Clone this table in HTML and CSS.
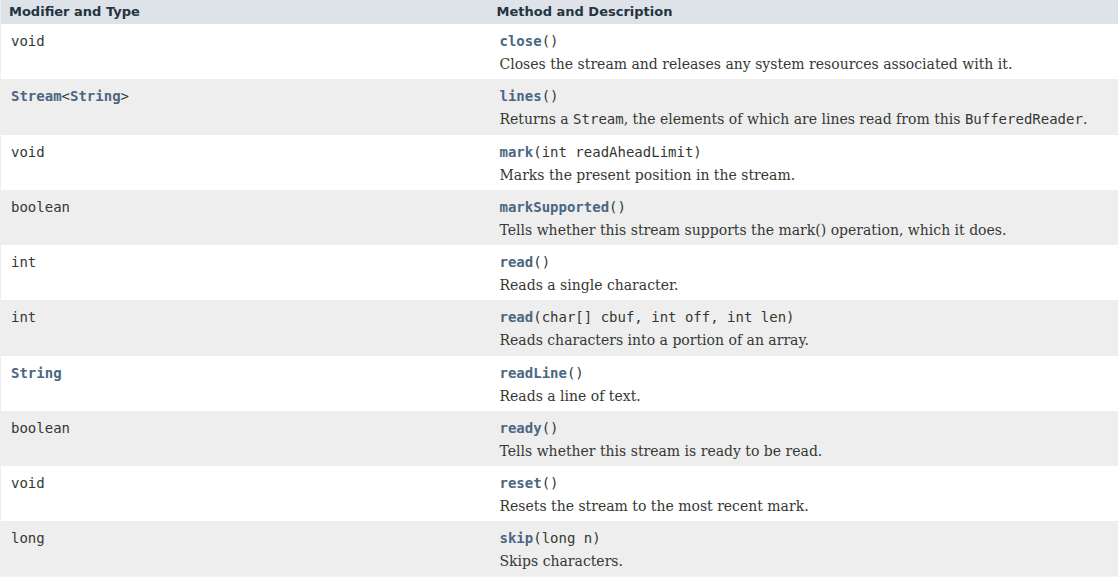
FILE: index.html
```html
<!DOCTYPE html>
<html>
<head>
<meta charset="utf-8">
<link rel="stylesheet" href="styles.css">
</head>
<body>
<table class="summary">
  <thead>
    <tr><th class="col-first">Modifier and Type</th><th class="col-last">Method and Description</th></tr>
  </thead>
  <tbody>
    <tr class="alt">
      <td class="col-first"><code>void</code></td>
      <td class="col-last"><code><a class="member">close</a>()</code><div class="desc">Closes the stream and releases any system resources associated with it.</div></td>
    </tr>
    <tr class="row">
      <td class="col-first"><code><a class="type">Stream</a>&lt;<a class="type">String</a>&gt;</code></td>
      <td class="col-last"><code><a class="member">lines</a>()</code><div class="desc">Returns a <code>Stream</code>, the elements of which are lines read from this <code>BufferedReader</code>.</div></td>
    </tr>
    <tr class="alt">
      <td class="col-first"><code>void</code></td>
      <td class="col-last"><code><a class="member">mark</a>(int&nbsp;readAheadLimit)</code><div class="desc">Marks the present position in the stream.</div></td>
    </tr>
    <tr class="row">
      <td class="col-first"><code>boolean</code></td>
      <td class="col-last"><code><a class="member">markSupported</a>()</code><div class="desc">Tells whether this stream supports the mark() operation, which it does.</div></td>
    </tr>
    <tr class="alt">
      <td class="col-first"><code>int</code></td>
      <td class="col-last"><code><a class="member">read</a>()</code><div class="desc">Reads a single character.</div></td>
    </tr>
    <tr class="row">
      <td class="col-first"><code>int</code></td>
      <td class="col-last"><code><a class="member">read</a>(char[]&nbsp;cbuf, int&nbsp;off, int&nbsp;len)</code><div class="desc">Reads characters into a portion of an array.</div></td>
    </tr>
    <tr class="alt">
      <td class="col-first"><code><a class="type">String</a></code></td>
      <td class="col-last"><code><a class="member">readLine</a>()</code><div class="desc">Reads a line of text.</div></td>
    </tr>
    <tr class="row">
      <td class="col-first"><code>boolean</code></td>
      <td class="col-last"><code><a class="member">ready</a>()</code><div class="desc">Tells whether this stream is ready to be read.</div></td>
    </tr>
    <tr class="alt">
      <td class="col-first"><code>void</code></td>
      <td class="col-last"><code><a class="member">reset</a>()</code><div class="desc">Resets the stream to the most recent mark.</div></td>
    </tr>
    <tr class="row">
      <td class="col-first"><code>long</code></td>
      <td class="col-last"><code><a class="member">skip</a>(long&nbsp;n)</code><div class="desc">Skips characters.</div></td>
    </tr>
  </tbody>
</table>
</body>
</html>
```

FILE: styles.css
```css
html, body {
  margin: 0;
  padding: 0;
  background: #ffffff;
}
body {
  font-family: "DejaVu Serif", serif;
  font-size: 14px;
  color: #353833;
}
.summary {
  width: 1130px;
  border-collapse: collapse;
  border-spacing: 0;
  border-left: 1px solid #eeeeee;
  border-bottom: 1px solid #f4f4f4;
  table-layout: fixed;
}
.summary th {
  background: #dee3e9;
  color: #253441;
  font-family: "DejaVu Sans", sans-serif;
  font-weight: bold;
  font-size: 13px;
  text-align: left;
  height: 24px;
  padding: 0 3px 0 8px;
  box-sizing: border-box;
  line-height: 24px;
  vertical-align: middle;
}
.summary th.col-first {
  width: 489px;
}
.summary th.col-last {
  padding-left: 7px;
}
.summary td {
  vertical-align: top;
  padding: 6px 3px 0 10px;
  height: 55.25px;
  box-sizing: border-box;
  line-height: 22px;
}
.summary td.col-last {
  padding-left: 10px;
}
tr.alt td {
  background: #ffffff;
}
tr.row td {
  background: #eeeeef;
}
code {
  font-family: "DejaVu Sans Mono", monospace;
  font-size: 14px;
  color: #353833;
}
a.member, a.type {
  color: #4a6782;
  font-weight: bold;
  text-decoration: none;
}
.desc {
  font-family: "DejaVu Serif", serif;
  font-size: 14px;
  line-height: 22px;
  padding-top: 1px;
}
.desc code {
  font-size: 14px;
}
```
